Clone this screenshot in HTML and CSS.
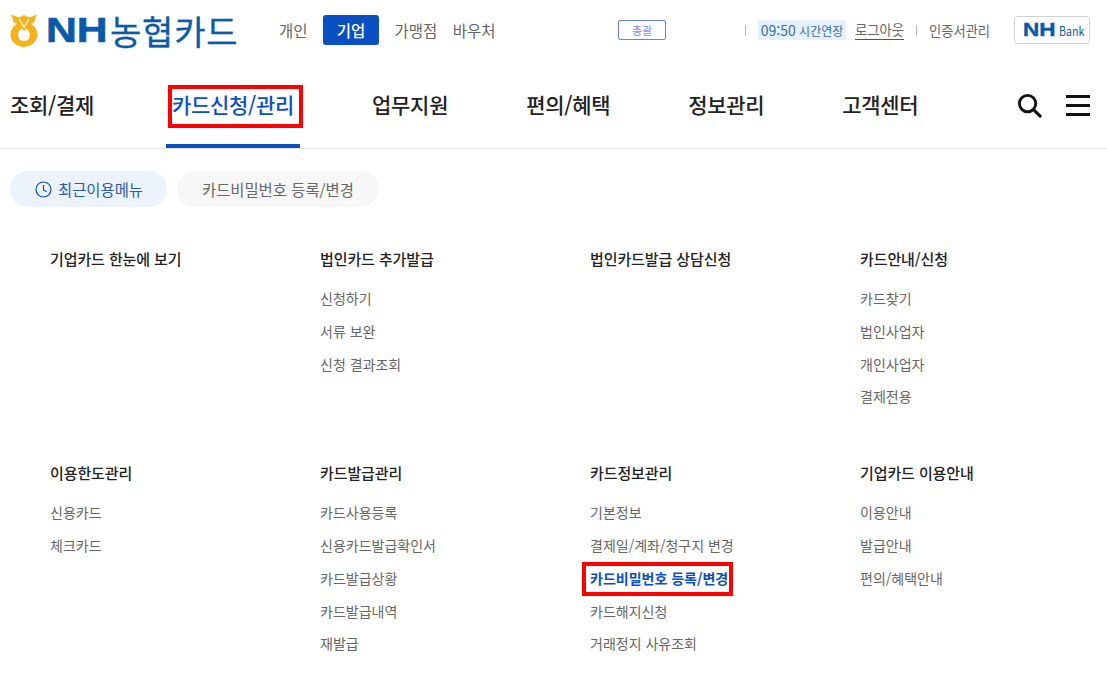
FILE: index.html
```html
<!DOCTYPE html>
<html lang="ko">
<head>
    <meta charset="UTF-8">
    <meta name="viewport" content="width=device-width, initial-scale=1.0">
    <title>NH농협카드 - 기업</title>
    <link rel="stylesheet" href="styles.css">
</head>
<body>
    <!-- Top bar -->
    <div class="top-bar">
        <a class="logo">
            <svg class="logo-mark" width="28" height="33" viewBox="0 0 28 33">
                <path d="M14 8a13.500 12.500 0 1 0 .01 0zM14 14.500a6 6.300 0 1 1-.01 0z" fill="#f5b21a" fill-rule="evenodd"/>
                <path d="M1 0.500l8 3 5 -2.500 5 2.500 8-3-3 8-7 3-3 6-3-6-7-3z" fill="#f5b21a"/>
                <path d="M9 5l5 8 5-8" fill="none" stroke="#fff" stroke-width="1.200"/>
            </svg>
            <span class="logo-nh">NH</span><span class="logo-name">농협카드</span>
        </a>
        <div class="member-tabs">
            <a>개인</a>
            <a class="active">기업</a>
            <a>가맹점</a>
            <a>바우처</a>
        </div>
        <span class="role-box">총괄</span>
        <div class="util">
            <span class="util-sep"></span>
            <span class="time-chip"><b>09:50</b> 시간연장</span>
            <a class="logout">로그아웃</a>
            <span class="util-sep"></span>
            <a class="cert">인증서관리</a>
            <a class="bank-btn"><span class="bank-nh">NH</span><span class="bank-name">Bank</span></a>
        </div>
    </div>

    <!-- Main navigation -->
    <div class="gnb">
        <a class="gnb-item">조회/결제</a>
        <a class="gnb-item active">카드신청/관리</a>
        <a class="gnb-item">업무지원</a>
        <a class="gnb-item">편의/혜택</a>
        <a class="gnb-item">정보관리</a>
        <a class="gnb-item">고객센터</a>
        <div class="gnb-icons">
            <svg width="25" height="25" viewBox="0 0 26 26">
                <circle cx="11" cy="11" r="8.500" fill="none" stroke="#111" stroke-width="3"/>
                <path d="M17.500 17.500L24 24" stroke="#111" stroke-width="3.200" stroke-linecap="round"/>
            </svg>
            <div class="hamburger"><span></span><span></span><span></span></div>
        </div>
    </div>

    <!-- Recent menus -->
    <div class="recent">
        <a class="pill pill-blue">
            <svg width="17" height="17" viewBox="0 0 17 17">
                <circle cx="8.500" cy="8.500" r="7.500" fill="none" stroke="#0b50c0" stroke-width="1.200"/>
                <path d="M8.500 4v5l3 1.800" fill="none" stroke="#0b50c0" stroke-width="1.200"/>
            </svg>
            최근이용메뉴
        </a>
        <a class="pill">카드비밀번호 등록/변경</a>
    </div>

    <!-- Sitemap -->
    <div class="menu-grid">
        <div class="menu-col">
            <h3>기업카드 한눈에 보기</h3>
        </div>
        <div class="menu-col">
            <h3>법인카드 추가발급</h3>
            <a>신청하기</a>
            <a>서류 보완</a>
            <a>신청 결과조회</a>
        </div>
        <div class="menu-col">
            <h3>법인카드발급 상담신청</h3>
        </div>
        <div class="menu-col">
            <h3>카드안내/신청</h3>
            <a>카드찾기</a>
            <a>법인사업자</a>
            <a>개인사업자</a>
            <a>결제전용</a>
        </div>
        <div class="menu-col">
            <h3>이용한도관리</h3>
            <a>신용카드</a>
            <a>체크카드</a>
        </div>
        <div class="menu-col">
            <h3>카드발급관리</h3>
            <a>카드사용등록</a>
            <a>신용카드발급확인서</a>
            <a>카드발급상황</a>
            <a>카드발급내역</a>
            <a>재발급</a>
        </div>
        <div class="menu-col">
            <h3>카드정보관리</h3>
            <a>기본정보</a>
            <a>결제일/계좌/청구지 변경</a>
            <a class="current">카드비밀번호 등록/변경</a>
            <a>카드해지신청</a>
            <a>거래정지 사유조회</a>
        </div>
        <div class="menu-col">
            <h3>기업카드 이용안내</h3>
            <a>이용안내</a>
            <a>발급안내</a>
            <a>편의/혜택안내</a>
        </div>
    </div>
</body>
</html>
```

FILE: styles.css
```css
:root {
    --nh-blue: #0b50c0;
    --text-dark: #222;
    --text-gray: #666;
}

html, body {
    height: 100%;
}

body {
    margin: 0;
    overflow: hidden;
    background: #fff;
    color: var(--text-dark);
    font-family: "Noto Sans CJK KR", "Noto Sans", sans-serif;
}

a {
    color: inherit;
    text-decoration: none;
}

/* Top bar */
.top-bar {
    display: flex;
    align-items: center;
    height: 60px;
    padding: 0 17px 0 10px;
}

.logo {
    display: flex;
    align-items: center;
    width: 269px;
    height: 33px;
    flex: none;
}

.logo-mark {
    margin-right: 8px;
}

.logo-nh {
    display: inline-block;
    width: 64px;
    font-family: "Liberation Sans", sans-serif;
    font-size: 35px;
    font-weight: 700;
    color: #0a5aa8;
    -webkit-text-stroke: 0.6px #0a5aa8;
    transform: scaleX(1.22);
    transform-origin: left center;
}

.logo-name {
    font-size: 34px;
    font-weight: 400;
    color: #0a5aa8;
    -webkit-text-stroke: 0.3px #0a5aa8;
    letter-spacing: 0.800px;
    white-space: nowrap;
}

.member-tabs {
    display: flex;
    align-items: center;
    gap: 15.500px;
    width: 339px;
    flex: none;
    font-size: 15.500px;
    color: var(--text-gray);
}

.member-tabs a.active {
    width: 56px;
    height: 30px;
    line-height: 30px;
    text-align: center;
    background: var(--nh-blue);
    color: #fff;
    border-radius: 3px;
    font-weight: 500;
}

.role-box {
    width: 46px;
    height: 18px;
    line-height: 18px;
    text-align: center;
    border: 1px solid #6a7cf0;
    border-radius: 2px;
    font-size: 11px;
    color: #8a8fe8;
    flex: none;
}

.util {
    display: flex;
    align-items: center;
    flex: none;
    margin-left: 79px;
    font-size: 13.300px;
    color: var(--text-gray);
    white-space: nowrap;
}

.util-sep {
    width: 1px;
    height: 11px;
    background: #bbb;
}

.time-chip {
    height: 20px;
    line-height: 20px;
    width: 88px;
    margin-left: 12px;
    text-align: center;
    background: #e5f0fd;
    color: #3a6ea8;
    font-size: 12px;
}

.time-chip b {
    font-size: 14px;
    font-weight: 400;
}

.logout {
    margin: 0 12px 0 9px;
    line-height: 18px;
    border-bottom: 1px solid #555;
}

.cert {
    margin-left: 12px;
}

.bank-btn {
    display: flex;
    align-items: center;
    width: 66px;
    height: 26px;
    margin-left: 24px;
    padding-left: 8px;
    border: 1px solid #d2d2d2;
    border-radius: 4px;
}

.bank-nh {
    display: inline-block;
    width: 36px;
    font-family: "Liberation Sans", sans-serif;
    font-size: 18px;
    font-weight: 700;
    color: #0a5aa8;
    -webkit-text-stroke: 0.4px #0a5aa8;
    transform: scaleX(1.25);
    transform-origin: left center;
}

.bank-name {
    display: inline-block;
    font-size: 12.500px;
    color: #0a5aa8;
    transform: scaleX(0.85);
    transform-origin: left center;
}

/* Main navigation */
.gnb {
    display: flex;
    align-items: stretch;
    gap: 66px;
    height: 88px;
    padding: 0 17px 0 4px;
    border-bottom: 1px solid #e8e8e8;
}

.gnb-item {
    position: relative;
    padding: 0 6px;
    line-height: 88px;
    font-size: 21px;
    font-weight: 500;
    letter-spacing: -0.300px;
    white-space: nowrap;
}

.gnb-item.active {
    color: var(--nh-blue);
    border-bottom: 4px solid var(--nh-blue);
    height: 84px;
}

.gnb-item.active::after {
    content: "";
    position: absolute;
    left: 2px;
    top: 25px;
    width: 127px;
    height: 35px;
    border: 4px solid #f00;
}

.gnb-icons {
    display: flex;
    align-items: center;
    gap: 24px;
    margin-left: auto;
    padding-top: 2px;
}

.hamburger {
    display: flex;
    flex-direction: column;
    gap: 6px;
    width: 24px;
}

.hamburger span {
    height: 3px;
    background: #111;
}

/* Recent menus */
.recent {
    display: flex;
    gap: 10px;
    padding: 22px 0 0 10px;
}

.pill {
    display: flex;
    align-items: center;
    gap: 6px;
    height: 36px;
    padding: 0 25px;
    border-radius: 18px;
    background: #f7f7f7;
    font-size: 15.400px;
    color: var(--text-gray);
}

.pill-blue {
    padding-right: 24px;
    background: #edf3fd;
    color: #2a5bb0;
}

/* Sitemap */
.menu-grid {
    display: grid;
    grid-template-columns: repeat(4, 270px);
    grid-template-rows: 214.200px auto;
    padding: 40px 0 0 50px;
}

.menu-col h3 {
    margin: 0 0 11px;
    font-size: 15px;
    line-height: 24px;
    font-weight: 500;
    letter-spacing: -0.100px;
    color: var(--text-dark);
}

.menu-col a {
    display: block;
    width: max-content;
    position: relative;
    font-size: 14px;
    line-height: 32.800px;
    color: var(--text-gray);
}

.menu-col a.current {
    color: var(--nh-blue);
    font-weight: 700;
}

.menu-col a.current::after {
    content: "";
    position: absolute;
    left: -8px;
    right: -5px;
    top: 0;
    bottom: -1px;
    border: 4px solid #f00;
}
```
